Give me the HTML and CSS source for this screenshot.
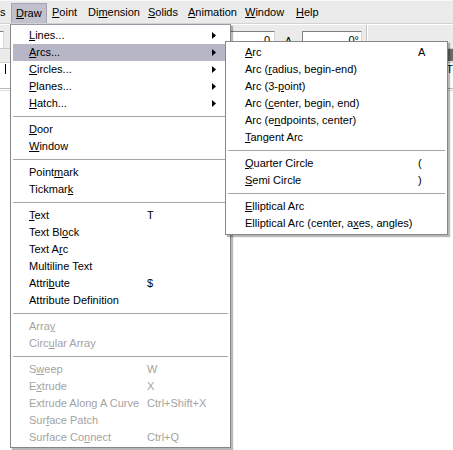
FILE: index.html
```html
<!DOCTYPE html>
<html>
<head>
<meta charset="utf-8">
<link rel="stylesheet" href="styles.css">
</head>
<body>
<div class="app">
  <div class="menubar">
    <span class="mb-item">s</span>
    <span class="mb-item mb-open"><u>D</u>raw</span>
    <span class="mb-item"><u>P</u>oint</span>
    <span class="mb-item">Di<u>m</u>ension</span>
    <span class="mb-item"><u>S</u>olids</span>
    <span class="mb-item"><u>A</u>nimation</span>
    <span class="mb-item"><u>W</u>indow</span>
    <span class="mb-item"><u>H</u>elp</span>
  </div>
  <div class="toolbar">
    <div class="field field-left"></div>
    <div class="field field-a"><span>0</span></div>
    <span class="tb-label">A</span>
    <div class="field field-b"><span>0°</span></div>
    <div class="tb-sep"></div>
    <div class="tb-rest"></div>
  </div>
  <div class="ruler"><div class="ruler-btn"></div></div>
  <div class="textrow"><span class="bar-left"></span><span class="t-right">T</span></div>
  <div class="divider"></div>
  <div class="canvas"></div>
</div>

<div class="menu menu-main">
  <div class="mi"><span class="lbl"><u>L</u>ines...</span><span class="sc"></span><span class="arr"><svg width="4" height="7" viewBox="0 0 4 7"><polygon points="0,0 4,3.5 0,7" fill="#000"/></svg></span></div>
  <div class="mi mi-hot"><span class="lbl"><u>A</u>rcs...</span><span class="sc"></span><span class="arr"><svg width="4" height="7" viewBox="0 0 4 7"><polygon points="0,0 4,3.5 0,7" fill="#000"/></svg></span></div>
  <div class="mi"><span class="lbl"><u>C</u>ircles...</span><span class="sc"></span><span class="arr"><svg width="4" height="7" viewBox="0 0 4 7"><polygon points="0,0 4,3.5 0,7" fill="#000"/></svg></span></div>
  <div class="mi"><span class="lbl"><u>P</u>lanes...</span><span class="sc"></span><span class="arr"><svg width="4" height="7" viewBox="0 0 4 7"><polygon points="0,0 4,3.5 0,7" fill="#000"/></svg></span></div>
  <div class="mi"><span class="lbl"><u>H</u>atch...</span><span class="sc"></span><span class="arr"><svg width="4" height="7" viewBox="0 0 4 7"><polygon points="0,0 4,3.5 0,7" fill="#000"/></svg></span></div>
  <div class="sep"></div>
  <div class="mi"><span class="lbl"><u>D</u>oor</span></div>
  <div class="mi"><span class="lbl"><u>W</u>indow</span></div>
  <div class="sep"></div>
  <div class="mi"><span class="lbl">Point<u>m</u>ark</span></div>
  <div class="mi"><span class="lbl">Tickmar<u>k</u></span></div>
  <div class="sep"></div>
  <div class="mi"><span class="lbl"><u>T</u>ext</span><span class="sc">T</span></div>
  <div class="mi"><span class="lbl">Text Bl<u>o</u>ck</span></div>
  <div class="mi"><span class="lbl">Text A<u>r</u>c</span></div>
  <div class="mi"><span class="lbl">Multiline Text</span></div>
  <div class="mi"><span class="lbl">Attri<u>b</u>ute</span><span class="sc">$</span></div>
  <div class="mi"><span class="lbl">Attribute Definition</span></div>
  <div class="sep"></div>
  <div class="mi mi-off"><span class="lbl">Arra<u>y</u></span></div>
  <div class="mi mi-off"><span class="lbl">Circ<u>u</u>lar Array</span></div>
  <div class="sep"></div>
  <div class="mi mi-off"><span class="lbl">S<u>w</u>eep</span><span class="sc">W</span></div>
  <div class="mi mi-off"><span class="lbl">E<u>x</u>trude</span><span class="sc">X</span></div>
  <div class="mi mi-off"><span class="lbl">Extrude Along A Curve</span><span class="sc">Ctrl+Shift+X</span></div>
  <div class="mi mi-off"><span class="lbl">Sur<u>f</u>ace Patch</span></div>
  <div class="mi mi-off"><span class="lbl">Surface Co<u>n</u>nect</span><span class="sc">Ctrl+Q</span></div>
</div>

<div class="menu menu-sub">
  <div class="mi"><span class="lbl"><u>A</u>rc</span><span class="sc">A</span></div>
  <div class="mi"><span class="lbl">Arc (<u>r</u>adius, begin-end)</span></div>
  <div class="mi"><span class="lbl">Arc (3-<u>p</u>oint)</span></div>
  <div class="mi"><span class="lbl">Arc (<u>c</u>enter, begin, end)</span></div>
  <div class="mi"><span class="lbl">Arc (e<u>n</u>dpoints, center)</span></div>
  <div class="mi"><span class="lbl"><u>T</u>angent Arc</span></div>
  <div class="sep"></div>
  <div class="mi"><span class="lbl"><u>Q</u>uarter Circle</span><span class="sc">(</span></div>
  <div class="mi"><span class="lbl"><u>S</u>emi Circle</span><span class="sc">)</span></div>
  <div class="sep"></div>
  <div class="mi"><span class="lbl"><u>E</u>lliptical Arc</span></div>
  <div class="mi"><span class="lbl">Elliptical Arc (center, a<u>x</u>es, angles)</span></div>
</div>
</body>
</html>
```

FILE: styles.css
```css
* { box-sizing: border-box; }
html, body { margin: 0; padding: 0; }
body {
  width: 453px;
  height: 450px;
  overflow: hidden;
  background: #fff;
  font-family: "Liberation Sans", Arial, sans-serif;
  font-size: 11px;
  color: #000;
  position: relative;
}
u { text-decoration: underline; text-underline-offset: 1px; }

.app { display: flex; flex-direction: column; height: 450px; }

.menubar {
  height: 24px;
  background: #ebebeb;
  border-top: 1px solid #f8f8f8;
  border-bottom: 1px solid #d2d2d2;
  display: grid;
  grid-template-columns: 11px 36px 36px 60px 40px 57px 51px auto;
  align-items: end;
}
.mb-item {
  height: 20px;
  line-height: 19px;
  padding-left: 5px;
  white-space: nowrap;
}
.mb-item:first-child { padding-left: 0; }
.mb-open {
  background: #c1c0cd;
  border: 1px solid #a5a4b2;
  border-bottom: none;
  padding-left: 4px;
}

.toolbar {
  height: 24px;
  background: #ebebeb;
  border-top: 1px solid #fff;
  display: flex;
  align-items: flex-start;
}
.field {
  height: 18px;
  margin-top: 6px;
  background: #fff;
  border-top: 1px solid #808080;
  border-left: 1px solid #808080;
  border-right: 1px solid #d8d8d8;
  border-bottom: 1px solid #d8d8d8;
  display: flex;
  justify-content: flex-end;
  line-height: 16px;
  padding-right: 4px;
}
.field-left { width: 4px; border-left: none; padding-right: 0; }
.field-a { width: 48px; margin-left: 223px; }
.tb-label { width: 27px; text-align: center; margin-top: 8px; line-height: 16px; }
.field-b { width: 60px; padding-right: 2px; }
.tb-sep {
  width: 2px;
  height: 24px;
  margin-left: 4px;
  border-left: 1px solid #c4c4c4;
  border-right: 1px solid #fff;
}
.tb-rest { flex: 1; }

.ruler {
  height: 14px;
  background: #ebebeb;
  border-top: 1px solid #c8c8c8;
  display: flex;
  justify-content: flex-end;
}
.ruler-btn { width: 6px; height: 12px; background: #6a6a6a; }

.textrow {
  height: 26px;
  background: #fff;
  border-top: 1px solid #d0d0d0;
  display: flex;
  justify-content: space-between;
  align-items: flex-start;
  line-height: 12px;
}
.bar-left { width: 1px; height: 10px; background: #000; margin-left: 5px; margin-top: 1px; }
.t-right { margin-right: 0; }

.divider {
  height: 3px;
  border-top: 1px solid #b8b8b8;
  border-bottom: 1px solid #dcdcdc;
}
.canvas { flex: 1; background: #fff; }

/* menus */
.menu {
  position: absolute;
  background: #fff;
  border: 1px solid #868686;
  box-shadow: 2px 2px 1px rgba(0, 0, 0, 0.28);
  padding: 2px 2px 1px 2px;
  display: flex;
  flex-direction: column;
}
.menu-main { left: 10px; top: 24px; width: 221px; height: 424px; border-top-color: #9a9aa6; }
.menu-sub { left: 225px; top: 41px; width: 223px; height: 194px; }

.mi {
  height: 17px;
  line-height: 17px;
  display: grid;
  align-items: center;
  white-space: nowrap;
}
.menu-main .mi { grid-template-columns: 118px 1fr 16px; padding-left: 16px; }
.menu-sub .mi { grid-template-columns: 173px 1fr; padding-left: 17px; }
.mi-hot { background: #b7b6c7; }
.mi-off { color: #a3a3a3; }
.arr { display: flex; align-items: center; height: 17px; }
.arr svg { display: block; }

.sep {
  height: 9px;
  display: flex;
  align-items: center;
}
.sep::before {
  content: "";
  display: block;
  width: 100%;
  height: 1px;
  background: #a6a6a6;
}
```
